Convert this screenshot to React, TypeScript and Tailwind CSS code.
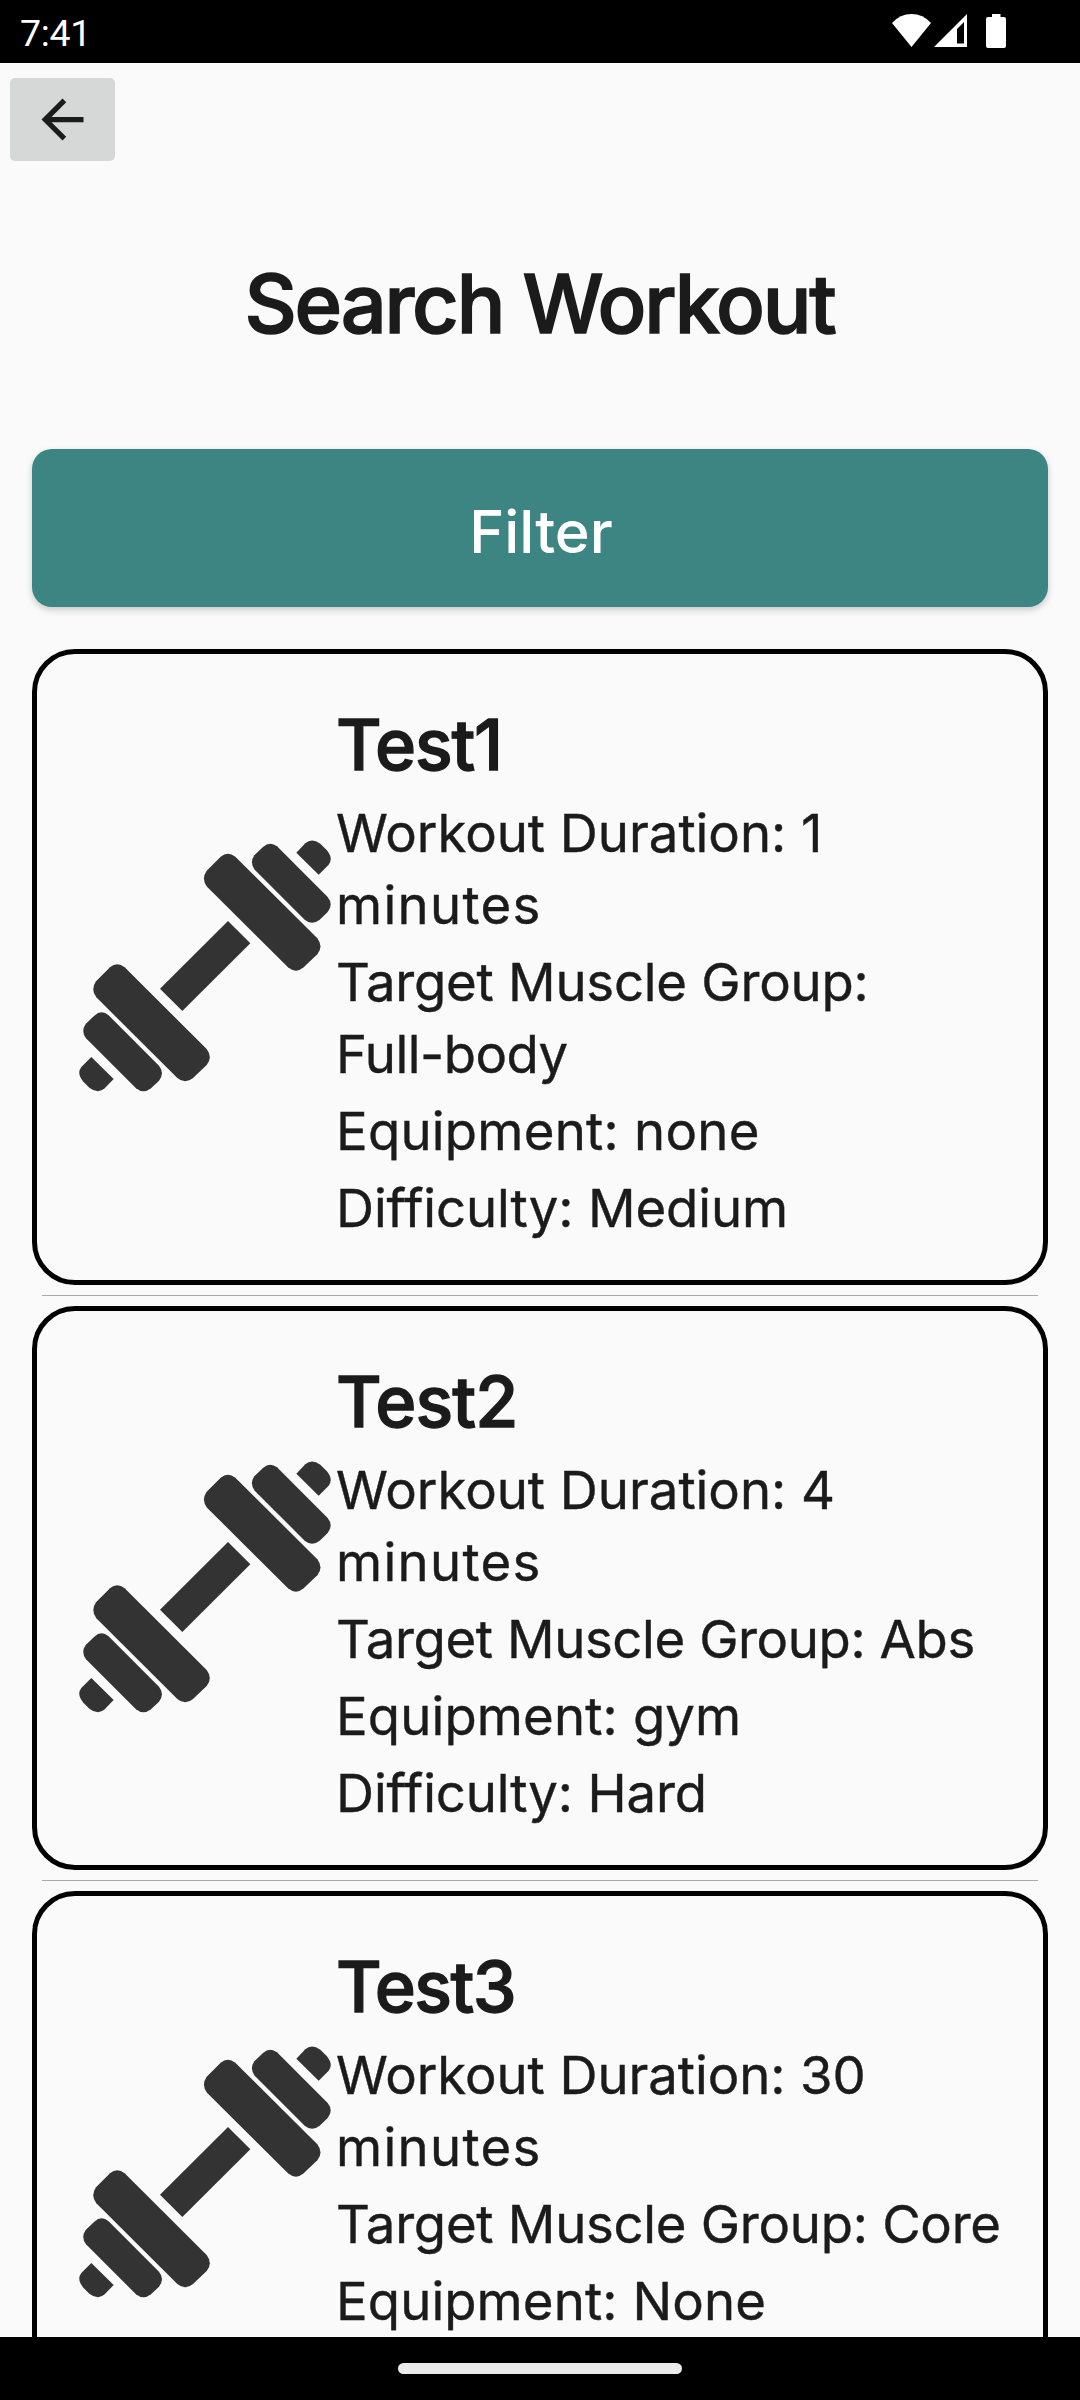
type Line = { text: string; className: string };
type Workout = { name: string; nameClass: string; fields: Line[][] };

const workouts: Workout[] = [
  {
    name: "Test1",
    nameClass: "tracking-[-1.2px]",
    fields: [
      [
        { text: "Workout Duration: 1", className: "tracking-[-0.02px]" },
        { text: "minutes", className: "tracking-[1.3px]" },
      ],
      [
        { text: "Target Muscle Group:", className: "tracking-[-0.24px]" },
        { text: "Full-body", className: "tracking-[-0.51px]" },
      ],
      [{ text: "Equipment: none", className: "tracking-[0.25px]" }],
      [{ text: "Difficulty: Medium", className: "tracking-[-0.1px]" }],
    ],
  },
  {
    name: "Test2",
    nameClass: "tracking-[-0.9px]",
    fields: [
      [
        { text: "Workout Duration: 4", className: "tracking-[-0.02px]" },
        { text: "minutes", className: "tracking-[1.3px]" },
      ],
      [{ text: "Target Muscle Group: Abs", className: "tracking-[-0.4px]" }],
      [{ text: "Equipment: gym", className: "tracking-[0.14px]" }],
      [{ text: "Difficulty: Hard", className: "tracking-[-0.14px]" }],
    ],
  },
  {
    name: "Test3",
    nameClass: "tracking-[-1.5px]",
    fields: [
      [
        { text: "Workout Duration: 30", className: "tracking-[-0.07px]" },
        { text: "minutes", className: "tracking-[1.3px]" },
      ],
      [{ text: "Target Muscle Group: Core", className: "tracking-[-0.28px]" }],
      [{ text: "Equipment: None", className: "tracking-[0.1px]" }],
    ],
  },
];

const BIG_PLATE =
  "M440 152L482 110Q503 92 526 110L772 355Q791 380 772 403L731 442Q708 462 684 442L441 200Q423 177 440 152Z";
const SMALL_PLATE =
  "M583 106L609 81Q630 62 651 79L803 231Q821 253 803 276L779 299Q756 317 734 299L584 149Q568 128 583 106Z";
const END_CAP = "M709 98L736 70Q755 52 781 71L800 90Q821 115 806 134L776 164Z";

function Dumbbell() {
  return (
    <svg viewBox="57 60 756 756" className="mb-0.5 h-[252px] w-[252px] shrink-0 fill-[#333333]">
      <path d={BIG_PLATE} />
      <path d={SMALL_PLATE} />
      <path d={END_CAP} />
      <path d="M504 303L571 370L367 573L300 506Z" />
      <path d={BIG_PLATE} transform="translate(-332 332)" />
      <path d={SMALL_PLATE} transform="translate(-506 506)" />
      <path d={END_CAP} transform="rotate(180 435 437.5)" />
    </svg>
  );
}

function StatusBar() {
  return (
    <header className="flex h-[63px] shrink-0 items-start justify-between bg-black pl-5 pr-[74px] text-white">
      <span className="mt-[11px] font-[Roboto,sans-serif] text-[37.5px] leading-[44px] tracking-[-0.3px]">7:41</span>
      <div className="mt-[14px] flex items-start">
        <svg viewBox="0 0 39 33" className="h-[33px] w-[39px] fill-white">
          <path d="M0 9Q8 0 19.500 0Q31 0 39 9L19.500 33Z" />
        </svg>
        <svg viewBox="0 0 33 33" className="ml-[3px] h-[33px] w-[33px] fill-white">
          <path fillRule="evenodd" d="M33 0V33H0ZM30 8L23 15V29.500H30Z" />
        </svg>
        <svg viewBox="0 0 20 34" className="ml-[19px] h-[34px] w-5 fill-white">
          <path d="M6 0H14.500V3H18Q20 3 20 5V32Q20 34 18 34H2Q0 34 0 32V5Q0 3 2 3H6Z" />
        </svg>
      </div>
    </header>
  );
}

function WorkoutCard({ workout }: { workout: Workout }) {
  return (
    <article className="flex items-center rounded-[43px] border-[5px] border-black pl-[42px]">
      <Dumbbell />
      <div className="ml-[5px] flex min-h-[554px] flex-col gap-[5px] pb-9 pt-[42px]">
        <h2
          className={
            "pt-0.5 text-[70px] font-medium leading-[94px] [-webkit-text-stroke:1.3px_#1b1b1b] " + workout.nameClass
          }
        >
          {workout.name}
        </h2>
        {workout.fields.map((lines) => (
          <p
            key={lines[0].text}
            className="whitespace-nowrap text-[52.7px] leading-[72px] [-webkit-text-stroke:0.4px_#1b1b1b]"
          >
            {lines.map((line) => (
              <span key={line.text} className={"block " + line.className}>
                {line.text}
              </span>
            ))}
          </p>
        ))}
      </div>
    </article>
  );
}

export default function App() {
  return (
    <div className="flex h-[2400px] w-[1080px] flex-col overflow-hidden bg-[#fafafa] font-[Inter,sans-serif] text-[#1b1b1b]">
      <StatusBar />
      <main className="flex min-h-0 flex-1 flex-col overflow-hidden">
        <button className="ml-[10px] mt-[15px] flex h-[83px] w-[105px] shrink-0 items-center justify-center rounded-[5px] bg-[#d6d8d7]">
          <svg viewBox="0 0 24 24" className="h-[63px] w-[63px] fill-[#1b1b1b]">
            <path d="M20 11H7.830l5.590-5.590L12 4l-8 8 8 8 1.410-1.410L7.830 13H20v-2z" />
          </svg>
        </button>
        <h1 className="mt-[94px] shrink-0 pr-px text-center text-[81px] font-medium leading-[98px] tracking-[-2.2px] [-webkit-text-stroke:1.5px_#1b1b1b]">
          Search Workout
        </h1>
        <button className="mx-8 mt-24 h-[158px] shrink-0 rounded-[20px] bg-[#3c8583] pl-0.5 pt-[5px] text-[59.5px] font-medium leading-[72px] text-white shadow-[0_3px_7px_rgba(0,0,0,0.2)]">
          Filter
        </button>
        <section className="mx-8 mt-[42px] shrink-0">
          {workouts.map((workout, i) => (
            <div key={workout.name}>
              {i > 0 && <div className="mx-[10px] my-[10px] h-px bg-[#a9a9a9]" />}
              <WorkoutCard workout={workout} />
            </div>
          ))}
        </section>
      </main>
      <nav className="flex h-[63px] shrink-0 justify-center bg-black">
        <div className="mt-[26px] h-[11px] w-[284px] rounded-full bg-[#ebebeb]" />
      </nav>
    </div>
  );
}
